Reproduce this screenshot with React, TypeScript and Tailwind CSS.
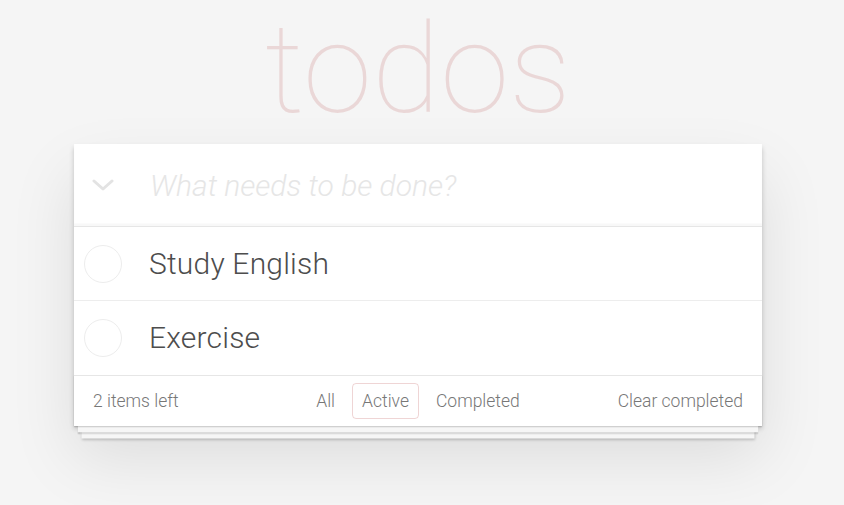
import { useState } from "react";

type Todo = { id: number; title: string; completed: boolean };

const initialTodos: Todo[] = [
  { id: 1, title: "Study English", completed: false },
  { id: 2, title: "Exercise", completed: false },
];

const TodoRow = ({ todo }: { todo: Todo }) => {
  return (
    <li className="flex items-center h-[74px] border-b border-[#ededed] last:border-b-0">
      <div className="w-[75px] flex items-center pl-[10px]">
        <span className="block w-[38px] h-[38px] rounded-full border border-[#ededed]" />
      </div>
      <label className="text-[30px] font-light text-[#4d4d4d] leading-none tracking-[0.2px]">
        {todo.title}
      </label>
    </li>
  );
};

export default function App() {
  const [todos] = useState<Todo[]>(initialTodos);
  const left = todos.filter((t) => !t.completed).length;

  return (
    <div
      className="min-h-[505px] bg-[#f5f5f5] overflow-hidden"
      style={{ fontFamily: "Roboto, 'Liberation Sans', sans-serif" }}
    >
      <div className="ml-[74px] w-[688px]">
        <h1 className="mb-[4px] text-center text-[125px] leading-[140px] font-thin text-[rgba(175,47,47,0.15)]">
          todos
        </h1>

        <section className="bg-white shadow-[0_2.5px_5px_0_rgba(0,0,0,0.2),0_31px_62px_0_rgba(0,0,0,0.1)]">
          <header className="flex items-center h-[82px] shadow-[inset_0_-2.5px_1.25px_rgba(0,0,0,0.03)]">
            <div className="w-[75px] flex items-center pl-[18px]">
              <svg width="22" height="13" viewBox="0 0 22 13">
                <polyline
                  points="2,2 11,10 20,2"
                  fill="none"
                  stroke="#e3e3e3"
                  strokeWidth="3"
                  strokeLinecap="round"
                  strokeLinejoin="round"
                />
              </svg>
            </div>
            <span className="text-[30px] italic font-light text-[#e6e6e6] ml-px">
              What needs to be done?
            </span>
          </header>

          <ul className="border-t border-[#e6e6e6]">
            {todos.map((t) => (
              <TodoRow key={t.id} todo={t} />
            ))}
          </ul>

          <footer className="flex items-center h-[51px] px-[19px] border-t border-[#e6e6e6] bg-white text-[17.5px] font-light text-[#777] shadow-[0_1.25px_1.25px_rgba(0,0,0,0.2),0_10px_0_-3.75px_#f6f6f6,0_11.25px_1.25px_-3.75px_rgba(0,0,0,0.2),0_20px_0_-7.5px_#f6f6f6,0_21.25px_2.5px_-7.5px_rgba(0,0,0,0.2)]">
            <span className="flex-1">{left} items left</span>
            <ul className="flex items-center gap-[7.5px]">
              <li className="px-[8.75px] py-[3.75px] border border-transparent rounded-[4px]">All</li>
              <li className="px-[8.75px] py-[3.75px] border border-[rgba(175,47,47,0.2)] rounded-[4px]">
                Active
              </li>
              <li className="px-[8.75px] py-[3.75px] border border-transparent rounded-[4px]">Completed</li>
            </ul>
            <span className="flex-1 text-right">Clear completed</span>
          </footer>
        </section>
      </div>
    </div>
  );
}
